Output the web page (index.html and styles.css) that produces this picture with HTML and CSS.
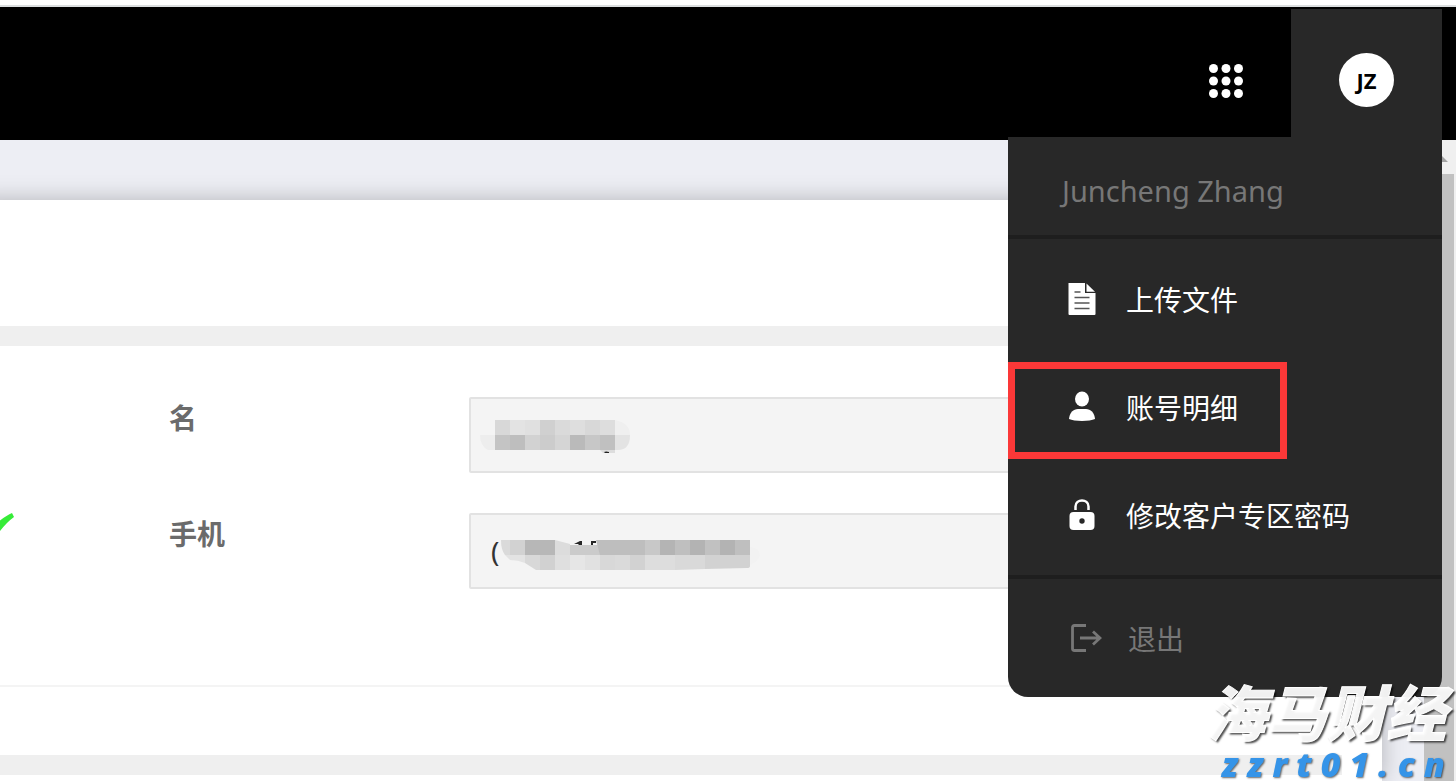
FILE: index.html
```html
<!DOCTYPE html>
<html lang="zh-CN">
<head>
    <meta charset="UTF-8">
    <meta name="viewport" content="width=device-width, initial-scale=1.0">
    <title>账号明细</title>
    <link rel="stylesheet" href="styles.css">
</head>
<body>
    <header class="topbar">
        <button class="apps-btn" aria-label="应用">
            <svg width="36" height="36" viewBox="0 0 36 36" fill="#fff">
                <circle cx="5.500" cy="5.500" r="4.500"/><circle cx="18" cy="5.500" r="4.500"/><circle cx="30.500" cy="5.500" r="4.500"/>
                <circle cx="5.500" cy="18" r="4.500"/><circle cx="18" cy="18" r="4.500"/><circle cx="30.500" cy="18" r="4.500"/>
                <circle cx="5.500" cy="30.500" r="4.500"/><circle cx="18" cy="30.500" r="4.500"/><circle cx="30.500" cy="30.500" r="4.500"/>
            </svg>
        </button>
        <div class="account">
            <button class="account-btn"><span class="avatar">JZ</span></button>
            <nav class="menu">
                <p class="menu-name">Juncheng Zhang</p>
                <div class="menu-links">
                    <a class="menu-item" href="#">
                        <svg width="32" height="36" viewBox="0 0 32 36">
                            <path d="M2.500 2H19V12H29.500V33Q29.500 34 28.500 34H3.500Q2.500 34 2.500 33z" fill="#fff"/>
                            <path d="M20.500 2.500L29 10.800H20.500z" fill="#fff"/>
                            <path d="M8.500 11h6M8.500 16.500h15M8.500 22h15M8.500 27.500h15" stroke="#555" stroke-width="1.500"/>
                        </svg>
                        上传文件
                    </a>
                    <a class="menu-item current" href="#">
                        <svg width="32" height="36" viewBox="0 0 32 36" fill="#fff">
                            <ellipse cx="16" cy="10" rx="7" ry="7.500"/>
                            <path d="M3 30C3.500 23.500 7.500 20 12 20h8c4.500 0 8.500 3.500 9 10-5 2.500-21 2.500-26 0z"/>
                        </svg>
                        账号明细
                    </a>
                    <a class="menu-item" href="#">
                        <svg width="32" height="36" viewBox="0 0 32 36">
                            <path d="M9.500 13V9.500c0-8 13-8 13 0V13" fill="none" stroke="#fff" stroke-width="2.500"/>
                            <rect x="3.500" y="15" width="25" height="18" rx="4" fill="#fff"/>
                            <circle cx="16" cy="24" r="2.700" fill="#282828"/>
                        </svg>
                        修改客户专区密码
                    </a>
                </div>
                <a class="menu-item logout" href="#">
                    <svg width="34" height="36" viewBox="0 0 34 36" fill="none" stroke="#777" stroke-width="2.800">
                        <path d="M18 5.500H6.500Q4.500 5.500 4.500 7.500V28.500Q4.500 30.500 6.500 30.500H18"/>
                        <path d="M12 18H32M25 11.500L32 18L25 24.500"/>
                    </svg>
                    退出
                </a>
            </nav>
        </div>
    </header>

    <div class="viewport">
        <main class="page">
            <section class="panel intro"></section>
            <div class="band"></div>
            <form class="panel details">
                <svg class="tick" width="16" height="24" viewBox="0 0 16 24"><path d="M0 8.500Q7 3 12 1L14 5Q7 10 0 19z" fill="#36ec38"/></svg>
                <div class="row">
                    <label for="first-name">名</label>
                    <div class="field">
                        <input id="first-name" type="text" value="" readonly>
                        <svg class="mosaic" width="290" height="72" viewBox="0 0 290 72">
                            <path d="M10 37H25V52H18Q10 48 10 37z" fill="#ededed"/>
                            <path d="M145 22Q160 25 160 37H145z" fill="#efefef"/>
                            <path d="M145 37H160Q160 52 148 52H145z" fill="#e3e3e3"/>
                            <path d="M25 22h15v15h-15z" fill="#d8d8d8"/><path d="M40 22h15v15h-15z" fill="#e3e3e3"/>
                            <path d="M55 22h15v15h-15z" fill="#e0e0e0"/><path d="M70 22h15v15h-15z" fill="#d0d0d0"/>
                            <path d="M85 22h15v15h-15z" fill="#dadada"/><path d="M100 22h15v15h-15z" fill="#dedede"/>
                            <path d="M115 22h15v15h-15z" fill="#d8d8d8"/><path d="M130 22h15v15h-15z" fill="#dddddd"/>
                            <path d="M25 37h15v15h-15z" fill="#c4c4c4"/><path d="M40 37h15v15h-15z" fill="#bebebe"/>
                            <path d="M55 37h15v15h-15z" fill="#d2d2d2"/><path d="M70 37h15v15h-15z" fill="#cccccc"/>
                            <path d="M85 37h15v15h-15z" fill="#d5d5d5"/><path d="M100 37h15v15h-15z" fill="#bababa"/>
                            <path d="M115 37h15v15h-15z" fill="#c7c7c7"/><path d="M130 37h15v15h-15z" fill="#c0c0c0"/>
                            <path d="M130 52h15v3h-12z" fill="#dddddd"/><path d="M134 54q2-1 5 0v1h-4z" fill="#222"/>
                        </svg>
                    </div>
                </div>
                <div class="row">
                    <label for="mobile">手机</label>
                    <div class="field">
                        <input id="mobile" type="text" value="(" readonly>
                        <svg class="mosaic" width="290" height="72" viewBox="0 0 290 72">
                            <path d="M31 26h9v15h-5Q31 36 31 26z" fill="#dadada"/><path d="M40 26h15v15h-15z" fill="#d2d2d2"/>
                            <path d="M55 26h30v15h-30z" fill="#b7b7b7"/><path d="M85 26L100 30V41H85z" fill="#dcdcdc"/>
                            <path d="M100 31h30v10h-30z" fill="#cbcbcb"/><path d="M126 26h49v15h-45z" fill="#bebebe"/>
                            <path d="M175 26h15v15h-15z" fill="#c8c8c8"/><path d="M190 26h15v15h-15z" fill="#b4b4b4"/>
                            <path d="M205 26h15v15h-15z" fill="#bfbfbf"/><path d="M220 26h15v15h-15z" fill="#b3b3b3"/>
                            <path d="M235 26h15v15h-15z" fill="#c1c1c1"/><path d="M250 26h15v15h-15z" fill="#b3b3b3"/>
                            <path d="M265 26h15v15h-15z" fill="#bfbfbf"/>
                            <path d="M35 41H55V49Q48 46 40 46z" fill="#e3e3e3"/><path d="M55 41h15v15h-4L55 49z" fill="#d8d8d8"/>
                            <path d="M70 41h15v15h-15z" fill="#d1d1d1"/><path d="M85 41h15v15h-15z" fill="#dfdfdf"/>
                            <path d="M100 41h15v15h-15z" fill="#e6e6e6"/><path d="M115 41h15v15h-15z" fill="#e1e1e1"/>
                            <path d="M130 41h15v15h-15z" fill="#d8d8d8"/><path d="M145 41h15v15h-15z" fill="#dadada"/>
                            <path d="M160 41h15v15h-15z" fill="#d2d2d2"/><path d="M175 41h30v15h-30z" fill="#dddddd"/>
                            <path d="M205 41h30v14l-30 1z" fill="#d9d9d9"/><path d="M235 41h45v11q0 2-3 2l-42 1z" fill="#d2d2d2"/>
                            <path d="M280 33Q290 34 290 42Q288 48 280 51z" fill="#f2f2f2"/>
                            <path d="M104 30L110 27H112V31H109L108 30zM121 27H126V29H123V31H121z" fill="#262626"/>
                        </svg>
                    </div>
                </div>
            </form>
            <section class="panel actions"></section>
            <div class="band short"></div>
            <section class="panel rest"></section>
        </main>
        <div class="scrollbar">
            <svg width="30" height="34" viewBox="0 0 30 34"><path d="M6 22L15 13L24 22z" fill="#a3a3a3"/></svg>
            <div class="thumb"></div>
        </div>
    </div>

    <div class="watermark">
        <div class="watermark-name">海马财经</div>
        <div class="watermark-url">zzrt01.cn</div>
    </div>
</body>
</html>
```
FILE: styles.css
```css
* {
    box-sizing: border-box;
}

body {
    display: flex;
    flex-direction: column;
    height: 100vh;
    margin: 0;
    overflow: hidden;
    background-color: #fff;
    font-family: "Noto Sans", "Noto Sans CJK SC", sans-serif;
    font-size: 28px;
}

button {
    padding: 0;
    border: none;
    background: none;
    cursor: pointer;
}

svg {
    display: block;
    flex: none;
}

/* top bar */
.topbar {
    display: flex;
    flex: none;
    justify-content: flex-end;
    height: 135px;
    margin-top: 5px;
    padding: 2px 14px 3px 0;
    border-top: 2px solid #dcdfe0;
    background-color: #000;
}

.apps-btn {
    width: 130px;
    padding: 16px 0 0;
    display: flex;
    align-items: center;
    justify-content: center;
}

.account {
    position: relative;
    width: 151px;
    background-color: #282828;
}

.account-btn {
    display: flex;
    align-items: center;
    justify-content: center;
    width: 100%;
    height: 100%;
    padding-top: 14px;
}

.avatar {
    width: 55px;
    height: 54px;
    border-radius: 50%;
    background-color: #fff;
    color: #000;
    font: bold 22px/54px "Noto Sans", sans-serif;
}

/* drop-down menu */
.menu {
    position: absolute;
    top: 100%;
    right: 0;
    z-index: 2;
    width: 434px;
    border-radius: 0 0 20px 20px;
    background-color: #282828;
}

.menu-name {
    margin: 0;
    padding: 34px 54px 24px;
    color: #777;
    font-size: 29px;
    line-height: 40px;
}

.menu-links {
    padding: 6px 0;
    border: solid #1e1e1e;
    border-width: 4px 0;
}

.menu-item {
    display: flex;
    align-items: center;
    gap: 28px;
    height: 108px;
    padding-left: 58px;
    color: #fff;
    text-decoration: none;
}

.current {
    width: 279px;
    height: 97px;
    margin: 9px 0 2px;
    padding: 0 0 7px 51px;
    border: 7px solid #fb3838;
}

.logout {
    gap: 26px;
    height: 118px;
    padding-left: 60px;
}

.menu .logout {
    color: #777;
}

/* page */
.viewport {
    display: flex;
    flex: 1;
    min-height: 0;
    background-color: #edeef4;
}

.page {
    display: flex;
    flex: 1;
    flex-direction: column;
    min-width: 0;
    margin: 60px 42px 0 -20px;
    padding-left: 20px;
    background-color: #fff;
    box-shadow: 0 0 22px rgba(0, 0, 0, 0.25);
}

.intro {
    height: 126px;
}

.band {
    flex: none;
    height: 20px;
    margin-left: -20px;
    background-color: #efefef;
}

.short {
    margin-right: 40px;
}

.details {
    position: relative;
    display: flex;
    flex-direction: column;
    gap: 40px;
    height: 341px;
    padding: 51px 40px 0 169px;
    border-bottom: 2px solid #f4f4f4;
}

.tick {
    position: absolute;
    top: 166px;
    left: 0;
}

.row {
    display: flex;
}

.row label {
    width: 300px;
    color: #6b6b6b;
    font-weight: bold;
    line-height: 42px;
}

.field {
    position: relative;
    flex: 1;
}

.field input {
    display: block;
    width: 100%;
    height: 76px;
    padding: 0 20px;
    border: 2px solid #e2e2e2;
    border-radius: 2px;
    background-color: #f4f4f4;
    color: #333;
    font: 28px "Noto Sans", sans-serif;
    outline: none;
}

.mosaic {
    position: absolute;
    top: 1px;
    left: 1px;
    pointer-events: none;
}

.actions {
    height: 68px;
}

/* scrollbar */
.scrollbar {
    z-index: 1;
    display: flex;
    flex-direction: column;
    width: 32px;
    padding-right: 2px;
    background-color: #f0f0f0;
}

.thumb {
    flex: 1;
    background-color: #c1c1c1;
}

/* watermark */
.watermark {
    position: fixed;
    right: 2px;
    bottom: 0;
    z-index: 3;
    font-style: italic;
    font-weight: 900;
    text-align: right;
    pointer-events: none;
}

.watermark-name {
    padding-right: 8px;
    color: rgba(255, 255, 255, 0.94);
    font-size: 60px;
    line-height: 68px;
    -webkit-text-stroke: 1px #fff;
    text-shadow: 2px 2px 2px rgba(0, 0, 0, 0.7);
}

.watermark-url {
    color: #3594e8;
    font-family: "Open Sans", sans-serif;
    font-size: 34px;
    line-height: 34px;
    letter-spacing: 9px;
    text-shadow: 1px 1px 2px rgba(0, 0, 0, 0.6);
}
```
